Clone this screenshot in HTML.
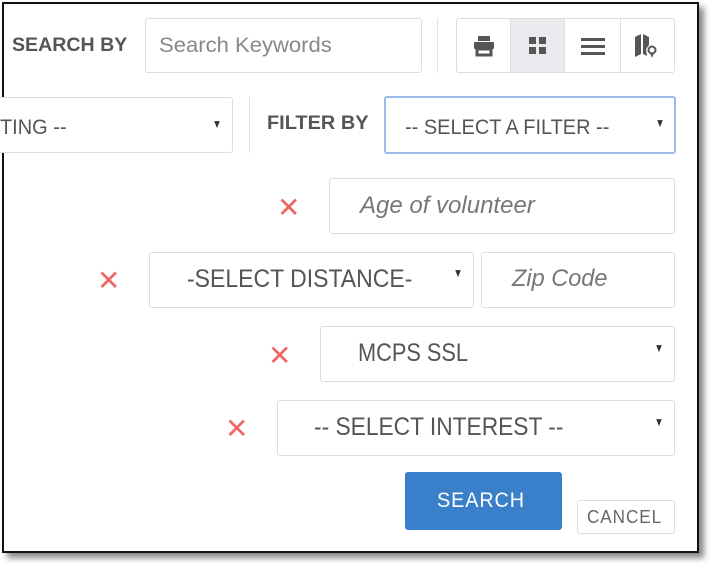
<!DOCTYPE html>
<html><head><style>
body{margin:0;width:713px;height:563px;background:#fff;position:relative;overflow:hidden;font-family:"Liberation Sans",sans-serif;}
.frame{position:absolute;left:2px;top:2px;width:693px;height:547px;border:2px solid #111;box-shadow:5px 5px 6px #888;background:#fff;}
.a{position:absolute;box-sizing:border-box;}
.box{border:1px solid #ddd;border-radius:3px;background:#fff;}
.t{position:absolute;white-space:nowrap;transform-origin:0 50%;}
.x{position:absolute;color:#e66;font-size:28px;line-height:30px;}
.arr{position:absolute;font-size:12px;color:#333;transform:scaleX(0.8);}
</style></head><body>
<div class="frame"></div>
<div class="t" style="left:12px;top:35px;font-size:19px;font-weight:bold;color:#555;transform:scaleX(1.03)">SEARCH BY</div>
<div class="a box" style="left:145px;top:18px;width:277px;height:55px"></div>
<div class="t" style="left:159px;top:34px;font-size:21px;color:#888;transform:scaleX(1.05)">Search Keywords</div>
<div class="a" style="left:437px;top:18px;width:1px;height:55px;background:#e3e3e3"></div>
<div class="a box" style="left:456px;top:18px;width:219px;height:55px"></div>
<div class="a" style="left:510px;top:19px;width:55px;height:53px;background:#e9ebee;border-left:1px solid #ddd;border-right:1px solid #ddd"></div>
<div class="a" style="left:620px;top:19px;width:1px;height:53px;background:#ddd"></div>
<svg class="a" style="left:472px;top:34px" width="24" height="24" viewBox="0 0 24 24"><rect x="6" y="2" width="12" height="5" fill="#555"/><rect x="2" y="8" width="20" height="7" rx="1" fill="#555"/><rect x="5" y="15" width="14" height="6" fill="none" stroke="#555" stroke-width="3"/></svg>
<svg class="a" style="left:527px;top:35px" width="22" height="22"><rect x="2" y="2" width="7" height="7" fill="#555"/><rect x="12" y="2" width="7" height="7" fill="#555"/><rect x="2" y="12" width="7" height="7" fill="#555"/><rect x="12" y="12" width="7" height="7" fill="#555"/></svg>
<svg class="a" style="left:580px;top:35px" width="26" height="22"><rect x="1" y="3" width="24" height="3" fill="#555"/><rect x="1" y="10" width="24" height="3" fill="#555"/><rect x="1" y="17" width="24" height="3" fill="#555"/></svg>
<svg class="a" style="left:634px;top:33px" width="24" height="26" viewBox="0 0 24 26"><path d="M1 4 L7 1 L7 21 L1 24Z M9 1 L15 4 L15 12 L12 16 L13 23 L9 21Z" fill="#555"/><circle cx="18" cy="17" r="3.5" fill="none" stroke="#555" stroke-width="2"/><path d="M16 20 L18 25 L20 20" fill="#555"/></svg>

<div class="a box" style="left:-10px;top:97px;width:243px;height:56px"></div>
<div class="t" style="left:0px;top:116px;font-size:21px;color:#555;transform:scaleX(0.95)">TING --</div>
<div class="arr" style="left:211px;top:117px">▼</div>
<div class="a" style="left:249px;top:97px;width:1px;height:56px;background:#e3e3e3"></div>
<div class="t" style="left:267px;top:113px;font-size:19px;font-weight:bold;color:#555;transform:scaleX(1.05)">FILTER BY</div>
<div class="a" style="left:384px;top:96px;width:292px;height:58px;border:2px solid #9bbcea;border-radius:3px"></div>
<div class="t" style="left:405px;top:116px;font-size:21px;color:#555;transform:scaleX(0.95)">-- SELECT A FILTER --</div>
<div class="arr" style="left:654px;top:116px">▼</div>

<div class="x" style="left:277px;top:193px">✕</div>
<div class="a box" style="left:329px;top:178px;width:346px;height:56px"></div>
<div class="t" style="left:360px;top:192px;font-size:24px;font-style:italic;color:#777;transform:scaleX(1.0)">Age of volunteer</div>

<div class="x" style="left:97px;top:266px">✕</div>
<div class="a box" style="left:149px;top:252px;width:325px;height:56px"></div>
<div class="t" style="left:187px;top:265px;font-size:25px;color:#555;transform:scaleX(0.92)">-SELECT DISTANCE-</div>
<div class="arr" style="left:452px;top:266px">▼</div>
<div class="a box" style="left:481px;top:252px;width:194px;height:56px"></div>
<div class="t" style="left:512px;top:265px;font-size:24px;font-style:italic;color:#777;transform:scaleX(0.98)">Zip Code</div>

<div class="x" style="left:268px;top:341px">✕</div>
<div class="a box" style="left:320px;top:326px;width:355px;height:56px"></div>
<div class="t" style="left:358px;top:339px;font-size:25px;color:#555;transform:scaleX(0.87)">MCPS SSL</div>
<div class="arr" style="left:653px;top:341px">▼</div>

<div class="x" style="left:225px;top:414px">✕</div>
<div class="a box" style="left:277px;top:400px;width:398px;height:56px"></div>
<div class="t" style="left:314px;top:413px;font-size:25px;color:#555;transform:scaleX(0.91)">-- SELECT INTEREST --</div>
<div class="arr" style="left:653px;top:415px">▼</div>

<div class="a" style="left:405px;top:472px;width:157px;height:58px;background:#3a7fca;border-radius:3px"></div>
<div class="t" style="left:437px;top:489px;font-size:21px;color:#fff;letter-spacing:1px;transform:scaleX(0.94)">SEARCH</div>
<div class="a box" style="left:577px;top:500px;width:98px;height:34px"></div>
<div class="t" style="left:587px;top:507px;font-size:18px;color:#666;letter-spacing:1px;transform:scaleX(0.95)">CANCEL</div>
</body></html>
